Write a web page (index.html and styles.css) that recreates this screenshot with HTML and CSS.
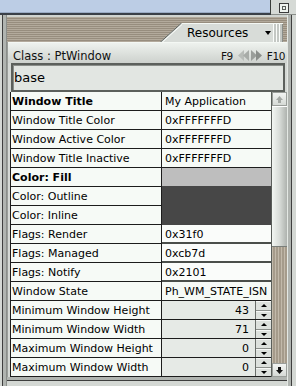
FILE: index.html
```html
<!DOCTYPE html>
<html lang="en">
<head>
    <meta charset="UTF-8" />
    <title>Resources</title>
    <link rel="stylesheet" href="styles.css">
</head>
<body>
    <div class="window">
        <div class="titlebar">
            <div class="titlebar-fill"></div>
            <div class="titlebar-ctrl"><span class="ctrl-btn"><span></span></span></div>
        </div>
        <div class="frame">
            <div class="tabstrip">
                <svg class="tab-slant" width="22" height="19" viewBox="0 0 22 19">
                    <polygon points="0,19 21,0 22,0 22,19" fill="#d8dcd8"/>
                    <line x1="0" y1="19.5" x2="21.5" y2="0" stroke="#5c605c" stroke-width="1"/>
                    <line x1="2" y1="19.5" x2="22" y2="1.5" stroke="#fafcfa" stroke-width="1"/>
                </svg>
                <div class="tab">
                    <span class="tab-label">Resources</span>
                    <span class="tab-arrow"></span>
                    <span class="tab-grip"></span>
                </div>
            </div>
            <div class="panel">
                <div class="classbar">
                    <span>Class : PtWindow</span>
                    <span class="nav">
                        <span>F9</span>
                        <svg width="24" height="11" viewBox="0 0 24 11">
                            <polygon points="0,5.5 6,0 6,11" fill="#b8bcb8"/>
                            <polygon points="5,5.5 11,0 11,11" fill="#a8aca8"/>
                            <polygon points="13,0 19,5.5 13,11" fill="#9a9e9a"/>
                            <polygon points="18,0 24,5.5 18,11" fill="#8a8e8a"/>
                        </svg>
                        <span>F10</span>
                    </span>
                </div>
                <div class="search">base</div>
                <div class="props">
                    <div class="rows">
                        <div class="row"><div class="k bold">Window Title</div><div class="v">My Application</div></div>
                        <div class="row"><div class="k">Window Title Color</div><div class="v">0xFFFFFFFD</div></div>
                        <div class="row"><div class="k">Window Active Color</div><div class="v">0xFFFFFFFD</div></div>
                        <div class="row"><div class="k">Window Title Inactive</div><div class="v">0xFFFFFFFD</div></div>
                        <div class="row"><div class="k bold">Color: Fill</div><div class="v swatch-light"></div></div>
                        <div class="row"><div class="k">Color: Outline</div><div class="v swatch-dark"></div></div>
                        <div class="row"><div class="k">Color: Inline</div><div class="v swatch-dark"></div></div>
                        <div class="row"><div class="k">Flags: Render</div><div class="v field">0x31f0</div></div>
                        <div class="row"><div class="k">Flags: Managed</div><div class="v field">0xcb7d</div></div>
                        <div class="row"><div class="k">Flags: Notify</div><div class="v field">0x2101</div></div>
                        <div class="row"><div class="k">Window State</div><div class="v">Ph_WM_STATE_ISN</div></div>
                        <div class="row"><div class="k">Minimum Window Height</div><div class="v num"><span class="num-field">43</span><span class="spin"><span class="spin-up"></span><span class="spin-down"></span></span></div></div>
                        <div class="row"><div class="k">Minimum Window Width</div><div class="v num"><span class="num-field">71</span><span class="spin"><span class="spin-up"></span><span class="spin-down"></span></span></div></div>
                        <div class="row"><div class="k">Maximum Window Height</div><div class="v num"><span class="num-field">0</span><span class="spin"><span class="spin-up"></span><span class="spin-down"></span></span></div></div>
                        <div class="row"><div class="k">Maximum Window Width</div><div class="v num"><span class="num-field">0</span><span class="spin"><span class="spin-up"></span><span class="spin-down"></span></span></div></div>
                    </div>
                    <div class="scrollbar">
                        <div class="sb-btn">
                            <svg width="7" height="7" viewBox="0 0 7 7"><polygon points="3.5,0 7,4 5,4 5,7 2,7 2,4 0,4" fill="#a4a8a4"/></svg>
                        </div>
                        <div class="sb-thumb"></div>
                        <div class="sb-track"></div>
                        <div class="sb-btn">
                            <svg width="7" height="7" viewBox="0 0 7 7"><polygon points="2,0 5,0 5,3 7,3 3.5,7 0,3 2,3" fill="#111"/></svg>
                        </div>
                    </div>
                </div>
            </div>
        </div>
    </div>
</body>
</html>
```

FILE: styles.css
```css
* {
    box-sizing: border-box;
}
body {
    margin: 0;
    font-family: "DejaVu Sans", sans-serif;
    font-size: 11px;
    color: #000;
    background: #d4d8d4;
}
.window {
    width: 296px;
    height: 386px;
    display: flex;
    flex-direction: column;
    overflow: hidden;
}

/* title bar */
.titlebar {
    height: 15px;
    display: flex;
    flex-shrink: 0;
}
.titlebar-fill {
    flex: 1;
    background: #bccde5;
    border-bottom: 2px solid #3a4048;
    border-right: 1px solid #3a3e3a;
    box-shadow: inset 0 -1px #9aabc4;
}
.titlebar-ctrl {
    width: 25px;
    background: #d6dad6;
    border-bottom: 1px solid #8a8e8a;
    display: flex;
    align-items: center;
    justify-content: center;
    padding-top: 2px;
}
.ctrl-btn {
    width: 10px;
    height: 10px;
    border: 1px solid #3c3c3c;
    background: #eef2ee;
    display: flex;
    align-items: center;
    justify-content: center;
}
.ctrl-btn span {
    width: 4px;
    height: 4px;
    border: 1px solid #5a5e5a;
}

/* frame */
.frame {
    flex: 1;
    display: flex;
    flex-direction: column;
    padding: 2px 9px 9px 7px;
    background: #d0d4d0;
    box-shadow:
        inset 2px 0 #d4d8d4, inset 3px 0 #3e3e3e, inset 6px 0 #b0b4b0, inset 7px 0 #8a8e8a,
        inset -4px 0 #d4d8d4, inset -5px 0 #3e3e3e, inset -8px 0 #b0b4b0, inset -9px 0 #e4e8e4,
        inset 0 -5px #d4d8d4, inset 0 -6px #3e3e3e, inset 0 -9px #b0b4b0;
}

/* tab strip */
.tabstrip {
    height: 25px;
    flex-shrink: 0;
    display: flex;
    justify-content: flex-end;
    align-items: flex-end;
    padding-right: 4px;
    background: repeating-linear-gradient(to bottom, #b3aa9c 0 1px, #978d7e 1px 2px);
}
.tab-slant {
    display: block;
}
.tab {
    width: 101px;
    height: 19px;
    background: #d8dcd8;
    border-top: 1px solid #f4f8f4;
    display: flex;
    align-items: center;
    padding-left: 5px;
    font-size: 12px;
}
.tab-arrow {
    margin-left: auto;
    margin-right: 2px;
    border-left: 3px solid transparent;
    border-right: 3px solid transparent;
    border-top: 4px solid #000;
}
.tab-grip {
    width: 10px;
    align-self: stretch;
    background: repeating-linear-gradient(to right, #fafcfa 0 1px, #c4c8c4 1px 3px);
    border-right: 1px solid #8a8e8a;
}

/* panel */
.panel {
    flex: 1;
    display: flex;
    flex-direction: column;
    background: #d4d8d4;
    border-left: 1px solid #9a9e9a;
}
.classbar {
    height: 21px;
    flex-shrink: 0;
    display: flex;
    justify-content: space-between;
    padding: 6px 2px 0 5px;
    font-size: 11.5px;
    line-height: 14px;
    color: #111;
    background: linear-gradient(#eef2ee, #cdd1cd);
    border-top: 1px solid #f4f8f4;
}
.nav {
    display: flex;
    align-items: center;
    gap: 5px;
    font-size: 10.5px;
    letter-spacing: -0.4px;
}
.nav svg {
    display: block;
    margin-top: -1px;
}
.search {
    height: 29px;
    flex-shrink: 0;
    margin: 0 2px 0 3px;
    border: 2px solid #5c605c;
    box-shadow: inset 1px 1px #8a8e8a;
    background: #e2e6e2;
    font-size: 13px;
    line-height: 25px;
    padding-left: 1px;
}

/* property table */
.props {
    display: flex;
    height: 285px;
    margin-left: 2px;
}
.rows {
    width: 261px;
    border-left: 1px solid #1c1c1c;
    background: #f6faf6;
}
.row {
    display: flex;
    height: 19px;
}
.k, .v {
    height: 19px;
    border-bottom: 1px solid #1c1c1c;
    line-height: 20px;
    white-space: nowrap;
    overflow: hidden;
}
.k {
    width: 151px;
    border-right: 1px solid #1c1c1c;
    padding-left: 1px;
}
.k.bold {
    font-weight: bold;
}
.v {
    flex: 1;
    padding-left: 3px;
}
.v.swatch-light {
    background: #bebebe;
    border-bottom-color: #474747;
}
.v.swatch-dark {
    background: #474747;
    border-bottom-color: #474747;
}
.v.field {
    background: #fafcfa;
    border-bottom-color: #4a4e4a;
    box-shadow: inset 0 -1px #4a4e4a;
}
.v.num {
    display: flex;
    padding-left: 0;
}
.num-field {
    flex: 1;
    text-align: right;
    padding-right: 6px;
    background: #e6eae6;
    border-right: 1px solid #6a6e6a;
}
.spin {
    width: 15px;
    display: flex;
    flex-direction: column;
    background: #dde1dd;
}
.spin-up, .spin-down {
    flex: 1;
    display: flex;
    align-items: center;
    justify-content: center;
    border-top: 1px solid #f6f8f6;
}
.spin-up {
    border-bottom: 1px solid #8a8e8a;
}
.spin-up::after {
    content: "";
    border-left: 3px solid transparent;
    border-right: 3px solid transparent;
    border-bottom: 3px solid #000;
}
.spin-down::after {
    content: "";
    border-left: 3px solid transparent;
    border-right: 3px solid transparent;
    border-top: 3px solid #000;
}

/* scrollbar */
.scrollbar {
    width: 16px;
    display: flex;
    flex-direction: column;
    border-left: 1px solid #5a5e5a;
}
.sb-btn {
    height: 14px;
    flex-shrink: 0;
    display: flex;
    align-items: center;
    justify-content: center;
    background: linear-gradient(#f2f4f2, #d6dad6);
    border: 1px solid #9a9e9a;
}
.sb-btn svg {
    display: block;
}
.sb-thumb {
    height: 141px;
    flex-shrink: 0;
    background: linear-gradient(to right, #f2f6f2, #d8dcd8 50%, #aeb2ae);
    border-top: 1px solid #fff;
    border-bottom: 1px solid #7a7e7a;
}
.sb-track {
    flex: 1;
    background: repeating-linear-gradient(to right, #c2b9aa 0 1px, #a59b8b 1px 3px);
}
```
